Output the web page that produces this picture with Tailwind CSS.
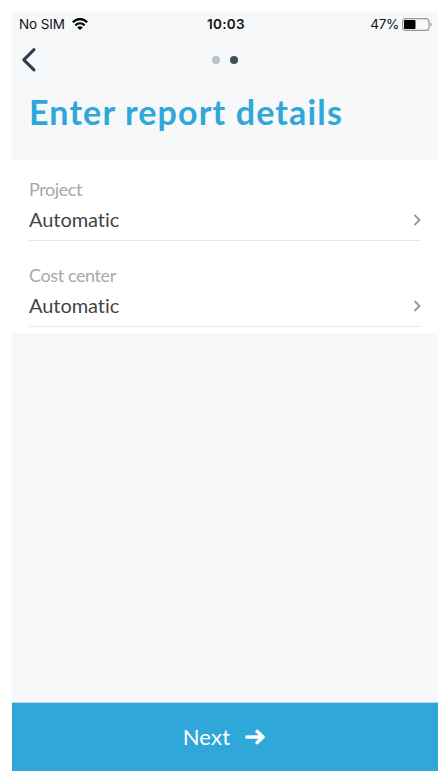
<!DOCTYPE html>
<html lang="en">
<head>
<meta charset="utf-8">
<title>Enter report details</title>
<script src="https://cdn.jsdelivr.net/npm/@tailwindcss/browser@4"></script>
</head>
<body class="bg-white w-[448px] h-[780px] overflow-hidden">
<main class="ml-3 mt-3 w-[426px] h-[759px] flex flex-col bg-[#f7f8fa] font-['Lato',sans-serif]">
  <header class="h-[148px] shrink-0">
    <div class="h-6 grid grid-cols-3 items-center pl-[7px] pr-[5px] font-['Inter',sans-serif] text-[13.5px] leading-6 text-[#111]">
      <div class="flex items-center gap-[7px]">
        <span class="whitespace-nowrap tracking-[-0.1px]">No SIM</span>
        <svg class="w-4 h-3" viewBox="0 0 16 12" fill="none" stroke="#000" stroke-width="2.3"><path d="M.8 4.3C5-.1 11-.1 15.2 4.3M3.4 7.3C6.2 4.6 9.8 4.6 12.6 7.3"/><path d="M5.3 9.4C7 7.9 9 7.9 10.7 9.4L8 12Z" fill="#000" stroke="none"/></svg>
      </div>
      <span class="text-center font-semibold tracking-[0.3px]">10:03</span>
      <div class="flex items-center justify-end gap-[3px]">
        <span class="tracking-[-0.3px]">47%</span>
        <svg class="w-[31px] h-[13px]" viewBox="0 0 31 13"><rect x=".6" y=".6" width="26.4" height="11.8" rx="3" fill="none" stroke="#999" stroke-width="1.2"/><rect x="2" y="2" width="11.5" height="9" rx="1" fill="#000"/><path d="M28.5 4.2Q30.9 6.5 28.5 8.8Z" fill="#888"/></svg>
      </div>
    </div>
    <div class="h-12 grid grid-cols-3 items-center pl-[9px]">
      <svg class="w-4 h-[26px]" viewBox="0 0 16 26" fill="none" stroke="#2d3e54" stroke-width="3.1" stroke-linecap="round" stroke-linejoin="round"><path d="M13 2.7L2.8 12.8L13 22.8"/></svg>
      <div class="flex justify-center gap-[10px] pr-[9px]"><i class="size-2 rounded-full bg-[#b5c2c6]"></i><i class="size-2 rounded-full bg-[#3b5357]"></i></div>
    </div>
    <h1 class="pl-[17px] pt-[8px] text-[34px] leading-10 font-bold tracking-[1.15px] text-[#30a7d9] whitespace-nowrap">Enter report details</h1>
  </header>
  <section class="bg-white h-[173px] shrink-0 px-[17px]">
    <div class="h-[81px] pt-[17px] border-b border-[#e8e8e8]">
      <div class="text-[18px] leading-6 text-[#a8a8a8] tracking-[-0.4px]">Project</div>
      <div class="flex justify-between items-center mt-[5px] h-7 text-[20px] text-[#444]"><span class="leading-6 pb-[3px] tracking-[-0.05px]">Automatic</span>
        <svg class="w-2 h-3" viewBox="0 0 8 12" fill="none" stroke="#999" stroke-width="1.9"><path d="M1.5 1L6.5 6L1.5 11"/></svg></div>
    </div>
    <div class="h-[86px] pt-[22px] border-b border-[#e8e8e8]">
      <div class="text-[18px] leading-6 text-[#a8a8a8] tracking-[-0.4px]">Cost center</div>
      <div class="flex justify-between items-center mt-[5px] h-7 text-[20px] text-[#444]"><span class="leading-6 pb-[3px] tracking-[-0.05px]">Automatic</span>
        <svg class="w-2 h-3" viewBox="0 0 8 12" fill="none" stroke="#999" stroke-width="1.9"><path d="M1.5 1L6.5 6L1.5 11"/></svg></div>
    </div>
  </section>
  <div class="flex-1"></div>
  <button class="h-[69px] shrink-0 border-t border-[#b9dcee] bg-[#30a7d9] text-white flex items-center justify-center gap-[15px] pr-[2px] text-[22px] leading-7">
    <span class="tracking-[0.2px]">Next</span>
    <svg class="w-5 h-4" viewBox="0 0 20 16" fill="none" stroke="#fff" stroke-width="3.6" stroke-linecap="round" stroke-linejoin="round"><path d="M2 8H17M12.2 2.5L18 8L12.2 13.5"/></svg>
  </button>
</main>
</body>
</html>
